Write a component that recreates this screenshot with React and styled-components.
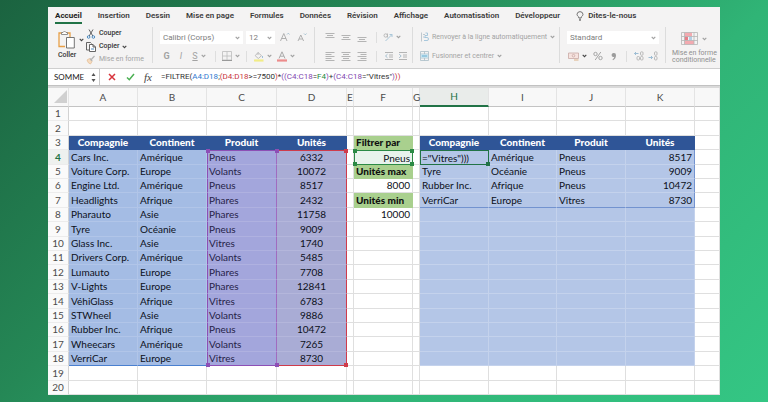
import React, { useState } from 'react'
import styled, { createGlobalStyle, css } from 'styled-components'

const GlobalStyle = createGlobalStyle`
    * {
        box-sizing: border-box;
    }
    body {
        margin: 0;
        font-family: Roboto, "Liberation Sans", sans-serif;
    }
    button, input, select {
        font: inherit;
        color: inherit;
        background: none;
        border: none;
        padding: 0;
        margin: 0;
    }
    svg {
        display: block;
        flex: none;
    }
`

const Page = styled.div`
    min-height: 100vh;
    padding: 7px 48px;
    background: linear-gradient(135deg, #1b6340 0%, #258856 34%, #30b476 66%, #34c684 100%);
`
const Window = styled.main`
    background-color: white;
    overflow: hidden;
`

/* tabs */
const Tabs = styled.nav`
    display: flex;
    gap: 16px;
    padding: 3px 7px 0;
    height: 20px;
    background-color: #f4f3f3;
`
const Tab = styled.a`
    display: flex;
    align-items: center;
    gap: 4px;
    height: 14px;
    font-size: 8px;
    line-height: 12px;
    font-weight: 600;
    white-space: nowrap;
    text-decoration: none;
    color: #3b3b3b;
    border-bottom: 2px solid ${props => props.$active ? '#217346' : 'transparent'};
    ${props => props.$active && 'font-weight: 700; color: #222;'}
`

/* ribbon */
const Ribbon = styled.div`
    display: flex;
    height: 42px;
    padding-bottom: 5px;
    background-color: #f4f3f3;
    border-bottom: 1px solid #cfcfcf;
`
const Group = styled.div`
    display: flex;
    flex: none;
    flex-direction: ${props => props.$row ? 'row' : 'column'};
    justify-content: ${props => props.$row ? 'flex-start' : 'space-between'};
    align-items: flex-start;
    width: ${props => props.$width}px;
    padding: ${props => props.$row ? '0 7px' : '3px 7px 0'};
    border-right: 1px solid #dcdcdc;
    &:last-child {
        border-right: none;
        flex: 1;
        padding: 0 4px 0 6px;
    }
`
const Line = styled.div`
    display: flex;
    align-items: center;
    gap: ${props => props.$gap || 0}px;
    height: 14px;
`
const Tool = styled.button`
    display: flex;
    flex: none;
    align-items: center;
    justify-content: ${props => props.$left ? 'flex-start' : 'center'};
    gap: 3px;
    min-width: ${props => props.$width || 16}px;
    height: 13px;
    font-size: ${props => props.$big ? 9 : 7}px;
    line-height: 9px;
    white-space: nowrap;
    color: ${props => props.$on ? '#333' : '#a3a3a3'};
    ${props => props.$on && 'font-weight: 500;'}
`
const Separator = styled.span`
    width: 1px;
    height: 11px;
    margin: 0 6px;
    background-color: #dedede;
`
const PasteButton = styled.button`
    display: flex;
    flex-direction: column;
    align-items: flex-start;
    gap: 2px;
    width: 31px;
    padding: 3px 0 0 3px;
    font-size: 7px;
    font-weight: 500;
    line-height: 9px;
    color: #333;
`
const PasteIcons = styled.span`
    display: flex;
    align-items: center;
    gap: 4px;
`
const ClipList = styled.div`
    display: flex;
    flex-direction: column;
`
const FormatButton = styled.button`
    display: flex;
    flex-direction: column;
    align-items: center;
    gap: 5px;
    padding-top: 5px;
    font-size: 7px;
    line-height: 7px;
    color: #8f8f8f;
    text-align: left;
    white-space: nowrap;
`
const SelectBox = styled.span`
    position: relative;
    display: flex;
    width: ${props => props.$width}px;
    height: 13px;
    background-color: white;
    select {
        width: 100%;
        padding-left: 3px;
        appearance: none;
        font-size: 8px;
        color: #7d7d7d;
    }
    svg {
        position: absolute;
        right: 3px;
        top: 5px;
        pointer-events: none;
    }
`

/* formula bar */
const FormulaBar = styled.div`
    display: flex;
    align-items: center;
    height: 17px;
    font-family: Lato, "Open Sans", sans-serif;
    border-bottom: 1px solid #c2c2c2;
`
const NameBox = styled.div`
    display: flex;
    align-items: center;
    justify-content: space-between;
    width: 52px;
    height: 16px;
    padding: 0 3px 0 6px;
    border-right: 1px solid #c8c8c8;
    input {
        width: 34px;
        font-size: 8px;
        color: #222;
    }
`
const BarButton = styled.button`
    display: flex;
    align-items: center;
    justify-content: center;
    width: 18px;
    height: 14px;
    font-family: "Liberation Serif", serif;
    font-style: italic;
    font-size: 11px;
    line-height: 12px;
    color: #444;
`
const BarButtons = styled.div`
    display: flex;
    padding: 0 4px 0 3px;
`
const Formula = styled.div`
    font-family: Roboto, "Liberation Sans", sans-serif;
    font-size: 8px;
    line-height: 14px;
    white-space: nowrap;
    color: #333;
`
const Ref = styled.span`
    color: ${props => props.$color};
`
const Strip = styled.div`
    height: 2px;
    background-color: #dadada;
`

/* sheet */
const Sheet = styled.table`
    width: 100%;
    table-layout: fixed;
    border-collapse: separate;
    border-spacing: 0;
    font-family: Lato, "Open Sans", sans-serif;
    font-size: 10px;
    line-height: 13px;
    color: #0c1020;
`
const ColHead = styled.th`
    height: 19px;
    padding: 0;
    font-weight: 400;
    background-color: ${props => props.$active ? '#e9ecea' : '#f8f8f8'};
    color: ${props => props.$active ? '#217346' : '#4c4c4c'};
    border-bottom: ${props => props.$active ? '2px solid #217346' : '1px solid #c4c4c4'};
    border-right: 1px solid #e4e4e4;
    svg {
        margin: 0 1px 1px auto;
    }
`
const RowHead = styled.th`
    padding: 0;
    font-weight: ${props => props.$active ? 700 : 400};
    color: ${props => props.$active ? '#217346' : '#4c4c4c'};
    background-color: ${props => props.$active ? '#eef1ef' : '#fafafa'};
    border-right: 1px solid #d2d2d2;
    border-bottom: 1px solid #ececec;
`
const Row = styled.tr`
    height: 14px;
    &:nth-child(5n + 2), &:nth-child(5n + 4) {
        height: 15px;
    }
`
const kinds = {
    empty: css`
        border-color: #dfdfdf;
    `,
    title: css`
        font-weight: 900;
        text-align: center;
        color: white;
        background-color: #2f5597;
        border-color: #2f5597;
    `,
    source: css`
        background-color: #a4bce4;
        border-color: #b1c5e8;
    `,
    product: css`
        padding-left: 1px;
        color: #262348;
        background-color: #a3a6dc;
        border-color: #afb1e0;
        border-left: 1px solid #8d4fb5;
        border-right-color: #a06cc0;
    `,
    units: css`
        text-align: center;
        background-color: #a9acd5;
        border-color: #b4b6db;
        border-right: 1px solid #cf3b4b;
    `,
    label: css`
        font-weight: 900;
        color: #111;
        background-color: #a9d08e;
        border-color: #a9d08e;
    `,
    value: css`
        text-align: right;
        border-color: #dfdfdf;
    `,
    criteria: css`
        text-align: right;
        background-color: #e8f3ec;
        border: 1px solid #2b8a45;
        line-height: 12px;
    `,
    result: css`
        background-color: #b4c6e7;
        border-color: #c4d2ec;
    `,
}
const Cell = styled.td`
    position: relative;
    padding: 0 2px;
    overflow: visible;
    white-space: nowrap;
    border: 0 solid;
    border-right-width: 1px;
    border-bottom-width: 1px;
    ${props => kinds[props.$kind]}
    ${props => props.$right && 'text-align: right;'}
    ${props => props.$top && `border-top: 1px solid ${props.$top};`}
    ${props => props.$bottom && `border-bottom: 1px solid ${props.$bottom};`}
    ${props => props.$edge && `border-right-color: ${props.$edge};`}
    ${props => props.$editing && `
        padding: 0 1px;
        border: 1px solid #217346;
        line-height: 12px;
    `}
`
const CellInput = styled.input`
    display: block;
    width: 100%;
    height: 12px;
`
const corners = {
    tl: 'left: -2px; top: -2px;',
    tr: 'right: -2px; top: -2px;',
    bl: 'left: -2px; bottom: -2px;',
    br: 'right: -2px; bottom: -2px;',
}
const Handle = styled.span`
    position: absolute;
    z-index: 1;
    width: 4px;
    height: 4px;
    background-color: ${props => props.$color};
    ${props => corners[props.$at]}
`

const PURPLE = '#8d4fb5'
const RED = '#cf3b4b'
const BLUE = '#4a80d0'
const GREEN = '#2b8a45'

const tabs = ['Accueil', 'Insertion', 'Dessin', 'Mise en page', 'Formules', 'Données', 'Révision', 'Affichage', 'Automatisation', 'Développeur']

const formula = [
    ['=FILTRE('],
    ['A4:D18', '#2f78cf'],
    [';'],
    ['(D4:D18', '#c8343c'],
    ['>=7500'],
    [')', '#c8343c'],
    ['*'],
    ['((C4:C18', '#7f48b0'],
    ['='],
    ['F4', '#258a3c'],
    [')', '#7f48b0'],
    ['+'],
    ['(C4:C18', '#7f48b0'],
    ['="Vitres"'],
    [')', '#7f48b0'],
    ['))', '#c8343c'],
]

const columns = [
    ['A', 69], ['B', 69], ['C', 70], ['D', 70], ['E', 7], ['F', 59], ['G', 7],
    ['H', 69], ['I', 68], ['J', 69], ['K', 69], ['', 25],
]

const source = [
    ['Cars Inc.', 'Amérique', 'Pneus', 6332],
    ['Voiture Corp.', 'Europe', 'Volants', 10072],
    ['Engine Ltd.', 'Amérique', 'Pneus', 8517],
    ['Headlights', 'Afrique', 'Phares', 2432],
    ['Pharauto', 'Asie', 'Phares', 11758],
    ['Tyre', 'Océanie', 'Pneus', 9009],
    ['Glass Inc.', 'Asie', 'Vitres', 1740],
    ['Drivers Corp.', 'Amérique', 'Volants', 5485],
    ['Lumauto', 'Europe', 'Phares', 7708],
    ['V-Lights', 'Europe', 'Phares', 12841],
    ['VéhiGlass', 'Afrique', 'Vitres', 6783],
    ['STWheel', 'Asie', 'Volants', 9886],
    ['Rubber Inc.', 'Afrique', 'Pneus', 10472],
    ['Wheecars', 'Amérique', 'Volants', 7265],
    ['VerriCar', 'Europe', 'Vitres', 8730],
]

const results = [
    ['="Vitres")))', 'Amérique', 'Pneus', 8517],
    ['Tyre', 'Océanie', 'Pneus', 9009],
    ['Rubber Inc.', 'Afrique', 'Pneus', 10472],
    ['VerriCar', 'Europe', 'Vitres', 8730],
]

const titles = ['Compagnie', 'Continent', 'Produit', 'Unités']

const filters = {
    3: ['label', 'Filtrer par'],
    4: ['criteria', 'Pneus'],
    5: ['label', 'Unités max'],
    6: ['value', '8000'],
    7: ['label', 'Unités min'],
    8: ['value', '10000'],
}

const Chevron = ({ dark }) => (
    <svg width="5" height="4" viewBox="0 0 5 4">
        <path d="M0.7 0.8L2.5 2.7L4.3 0.8" fill="none" stroke={dark ? '#444' : '#a0a0a0'} strokeWidth="1.1" />
    </svg>
)

const Lines = ({ y, align }) => {
    const shift = { left: 0, center: 1.5, right: 3 }[align]
    return (
        <svg width="10" height="11" viewBox="0 0 10 11" stroke="#b4b4b4" strokeWidth="1">
            {y.map((v, i) => {
                const x = i % 2 ? shift : 0
                return <path key={v} d={`M${x + 0.5} ${v}H${i % 2 ? x + 6.5 : 9.5}`} />
            })}
        </svg>
    )
}

const Indent = ({ back }) => (
    <svg width="10" height="10" viewBox="0 0 10 10" fill="none" stroke="#b4b4b4">
        <path d="M1 1.5H9M5 4H9M5 6H9M1 8.5H9" />
        <path d={back ? 'M3.5 3.2L1.5 5L3.5 6.8' : 'M1.2 3.2L3.2 5L1.2 6.8'} stroke="#a5bfd0" />
    </svg>
)

const PasteIcon = () => (
    <svg width="17" height="19" viewBox="0 0 17 19" fill="none">
        <path d="M7 16.5H1V3H12V7" stroke="#e8a048" strokeWidth="1.3" />
        <path d="M3.5 4.5V2.5H5Q6.5 -0.5 8 2.5H9.5V4.5Z" fill="#fff" stroke="#777" strokeWidth="0.8" />
        <path d="M8.5 7.5H16.3V18H8.5Z" fill="#fff" stroke="#666" strokeWidth="0.9" />
    </svg>
)

const CutIcon = () => (
    <svg width="10" height="10" viewBox="0 0 10 10" fill="none">
        <path d="M3 0.5L6.8 7M7 0.5L3.2 7" stroke="#555" strokeWidth="0.9" />
        <circle cx="2.6" cy="8" r="1.3" stroke="#3d82bd" strokeWidth="0.9" />
        <circle cx="7.4" cy="8" r="1.3" stroke="#3d82bd" strokeWidth="0.9" />
    </svg>
)

const CopyIcon = () => (
    <svg width="10" height="10" viewBox="0 0 10 10" fill="none" stroke="#555" strokeWidth="0.9">
        <path d="M3.5 8H0.5V0.5H4.5L5.5 1.5" />
        <path d="M3.5 2.5H7L9.5 5V9.5H3.5ZM7 2.5V5H9.5" fill="#fff" />
        <path d="M5 7H8" stroke="#3d82bd" />
    </svg>
)

const BrushIcon = () => (
    <svg width="10" height="10" viewBox="0 0 10 10" fill="none">
        <path d="M1 5L3.5 3.5L6 6.5L4.5 9Q2 8.5 1 5Z" fill="#f6dcc0" stroke="#e5bf98" strokeWidth="0.8" />
        <path d="M4 3.5L6.2 6M5.3 4.5L8.5 1" stroke="#b5b5b5" strokeWidth="1.2" />
    </svg>
)

const BorderIcon = () => (
    <svg width="10" height="10" viewBox="0 0 10 10" fill="none" stroke="#bdbdbd">
        <path d="M0.5 0.5H9.5V9H0.5ZM5 0.5V9M0.5 5H9.5" strokeWidth="0.8" />
        <path d="M0 9.5H10" stroke="#999" />
    </svg>
)

const BucketIcon = () => (
    <svg width="10" height="11" viewBox="0 0 10 11" fill="none">
        <path d="M4 1.5L7.5 4.7L4.3 7.5L1.2 4.7ZM4 1.5V4" stroke="#b5b5b5" strokeWidth="0.9" />
        <path d="M8.5 5V7" stroke="#9fc0d8" />
        <path d="M0 9.5H9.5" stroke="#f1ec86" strokeWidth="2.2" />
    </svg>
)

const FontColorIcon = () => (
    <svg width="10" height="11" viewBox="0 0 10 11" fill="none">
        <path d="M2 7.5L5 0.8L8 7.5M3.2 5.2H6.8" stroke="#a8a8a8" strokeWidth="1" />
        <path d="M0 9.5H10" stroke="#ec8b8b" strokeWidth="2.2" />
    </svg>
)

const SizeIcon = ({ down }) => (
    <svg width="10" height="10" viewBox="0 0 10 10" fill="none" stroke="#a8a8a8" strokeWidth="0.9">
        <path d={down ? 'M1 9L3.8 3L6.6 9M2 7H5.6' : 'M0.5 9L3.8 1.5L7 9M1.7 6.5H6'} />
        <path d={down ? 'M7 1.5L8.3 2.8L9.6 1.5' : 'M7 2.5L8.3 1.2L9.6 2.5'} stroke="#9fbccc" />
    </svg>
)

const OrientIcon = () => (
    <svg width="10" height="10" viewBox="0 0 10 10" fill="none">
        <path d="M2.5 9L9 2.5M9 5V2.5H6.5" stroke="#a9c6d8" />
        <circle cx="2.7" cy="3.5" r="1.7" stroke="#b4b4b4" strokeWidth="0.9" />
        <path d="M4.5 1.5V5.5" stroke="#b4b4b4" strokeWidth="0.9" />
    </svg>
)

const WrapIcon = () => (
    <svg width="9" height="10" viewBox="0 0 9 10" fill="none" stroke="#b9c3ca" strokeWidth="0.9">
        <path d="M1.5 0.5V9.5M3 2.5H5M3 5H4" />
        <path d="M5.5 1L7.5 1V3.5H5V6M4 8.5H7Q8.5 8.5 8.5 7T7 5.5H4.5" stroke="#9fc3da" />
    </svg>
)

const MergeIcon = () => (
    <svg width="9" height="10" viewBox="0 0 9 10" fill="none">
        <path d="M0.5 0.5H8.5V9.5H0.5ZM0.5 3H8.5M0.5 7H8.5M4.5 0.5V3M4.5 7V9.5" stroke="#a9bcc6" strokeWidth="0.8" />
        <path d="M1 3.4H8V6.6H1Z" fill="#bfe3f2" />
        <path d="M2 5H7" stroke="#68a9cb" strokeWidth="0.9" />
    </svg>
)

const CurrencyIcon = () => (
    <svg width="11" height="9" viewBox="0 0 11 9" fill="none">
        <path d="M0.5 1H10.5V6.5H0.5Z" fill="#f6e3df" stroke="#c9a9a4" strokeWidth="0.8" />
        <circle cx="5.5" cy="3.7" r="1.3" stroke="#c9a9a4" strokeWidth="0.8" />
        <path d="M6 8H10.5" stroke="#dcb185" />
    </svg>
)

const PercentIcon = () => (
    <svg width="10" height="10" viewBox="0 0 10 10" fill="none" stroke="#a5a5a5" strokeWidth="1">
        <circle cx="2.5" cy="3" r="1.7" />
        <circle cx="7.5" cy="7" r="1.7" />
        <path d="M7.8 1L2.2 9" />
    </svg>
)

const CommaIcon = () => (
    <svg width="6" height="9" viewBox="0 0 6 9">
        <path d="M3 1A2 2 0 1 0 3.4 4.8Q3 6.5 1.5 7.5L2 8.2Q5 6.5 5 3.2Q5 1 3 1Z" fill="#9c9c9c" />
    </svg>
)

const DecimalIcon = ({ less }) => (
    <svg width="10" height="10" viewBox="0 0 10 10" fill="none" stroke="#b2b2b2" strokeWidth="0.9">
        <rect x="6.5" y="0.8" width="2.5" height="3.5" rx="1" />
        <rect x="6.5" y="5.5" width="2.5" height="3.5" rx="1" />
        {!less && <rect x="3" y="5.5" width="2.5" height="3.5" rx="1" />}
        <path d={less ? 'M0.5 6.5H4.5M3 5L4.5 6.5L3 8' : 'M4.5 2.5H0.5M2 1L0.5 2.5L2 4'} stroke="#93b7d0" />
    </svg>
)

const ConditionalIcon = () => (
    <svg width="17" height="13" viewBox="0 0 17 13" fill="none">
        <path d="M3.5 0.5H11V4.5H3.5ZM3.5 8.5H13V12.5H3.5Z" fill="#f3aab0" />
        <path d="M3.5 4.5H7V8.5H3.5Z" fill="#e77c86" />
        <path d="M8 4.5H11V8.5H8Z" fill="#b3cfe5" />
        <path d="M0.5 0.5H16.5V12.5H0.5ZM0.5 4.5H16.5M0.5 8.5H16.5M3.5 0.5V12.5M13 0.5V12.5" stroke="#b5b5b5" strokeWidth="0.8" />
    </svg>
)

const BulbIcon = () => (
    <svg width="8" height="10" viewBox="0 0 8 10" fill="none" stroke="#555" strokeWidth="0.8">
        <path d="M2.8 7V6Q1 4.8 1 3.3Q1.2 0.8 4 0.6Q6.8 0.8 7 3.3Q7 4.8 5.2 6V7ZM3 8.3H5M3.3 9.5H4.7" />
    </svg>
)

const Dropdown = ({ label, value, width }) => (
    <SelectBox $width={width}>
        <select aria-label={label} defaultValue={value}>
            <option>{value}</option>
        </select>
        <Chevron />
    </SelectBox>
)

const RibbonBar = () => (
    <Ribbon>
        <Group $row $width={105}>
            <PasteButton>
                <PasteIcons><PasteIcon /><Chevron dark /></PasteIcons>
                Coller
            </PasteButton>
            <ClipList>
                <Tool $left $on><CutIcon />Couper</Tool>
                <Tool $left $on><CopyIcon />Copier<Chevron dark /></Tool>
                <Tool $left><BrushIcon />Mise en forme</Tool>
            </ClipList>
        </Group>
        <Group $width={162}>
            <Line $gap={3}>
                <Dropdown label="Police" value="Calibri (Corps)" width={83} />
                <Dropdown label="Taille" value="12" width={29} />
                <Tool $width={14} aria-label="Agrandir la police"><SizeIcon /></Tool>
                <Tool $width={14} aria-label="Réduire la police"><SizeIcon down /></Tool>
            </Line>
            <Line>
                <Tool $big $width={13}><b>G</b></Tool>
                <Tool $big><i>I</i></Tool>
                <Tool $big $width={20}><u>S</u><Chevron /></Tool>
                <Separator />
                <Tool $width={18} aria-label="Bordures"><BorderIcon /><Chevron /></Tool>
                <Separator />
                <Tool $width={20} aria-label="Remplissage"><BucketIcon /><Chevron /></Tool>
                <Tool $width={26} aria-label="Couleur de police"><FontColorIcon /><Chevron /></Tool>
            </Line>
        </Group>
        <Group $width={98}>
            <Line>
                <Tool aria-label="Aligner en haut"><Lines y={[1.5, 3.5, 5.5]} align="center" /></Tool>
                <Tool aria-label="Aligner au centre"><Lines y={[3.5, 5.5, 7.5]} align="center" /></Tool>
                <Tool aria-label="Aligner en bas"><Lines y={[5.5, 7.5, 9.5]} align="center" /></Tool>
                <Separator />
                <Tool $width={18} aria-label="Orientation"><OrientIcon /><Chevron /></Tool>
            </Line>
            <Line>
                <Tool aria-label="Aligner à gauche"><Lines y={[1.5, 3.5, 5.5, 7.5, 9.5]} align="left" /></Tool>
                <Tool aria-label="Centrer"><Lines y={[1.5, 3.5, 5.5, 7.5, 9.5]} align="center" /></Tool>
                <Tool aria-label="Aligner à droite"><Lines y={[1.5, 3.5, 5.5, 7.5, 9.5]} align="right" /></Tool>
                <Separator />
                <Tool $width={12} aria-label="Diminuer le retrait"><Indent back /></Tool>
                <Tool aria-label="Augmenter le retrait"><Indent /></Tool>
            </Line>
        </Group>
        <Group $width={147}>
            <Line><Tool $left><WrapIcon />Renvoyer à la ligne automatiquement<Chevron /></Tool></Line>
            <Line><Tool $left><MergeIcon />Fusionner et centrer<Chevron /></Tool></Line>
        </Group>
        <Group $width={106}>
            <Line><Dropdown label="Format de nombre" value="Standard" width={92} /></Line>
            <Line>
                <Tool $width={21} aria-label="Monétaire"><CurrencyIcon /><Chevron dark /></Tool>
                <Tool $width={20} aria-label="Pourcentage"><PercentIcon /></Tool>
                <Tool $width={12} aria-label="Séparateur"><CommaIcon /></Tool>
                <Separator />
                <Tool $width={12} aria-label="Ajouter une décimale"><DecimalIcon /></Tool>
                <Tool aria-label="Réduire les décimales"><DecimalIcon less /></Tool>
            </Line>
        </Group>
        <Group $row>
            <FormatButton>
                <PasteIcons><ConditionalIcon /><Chevron /></PasteIcons>
                <span>Mise en forme<br />conditionnelle</span>
            </FormatButton>
        </Group>
    </Ribbon>
)

const SheetRow = ({ n, edit, setEdit }) => {
    const data = source[n - 4]
    const found = results[n - 4]
    const first = n === 4
    const last = n === 18
    const inTable = n >= 4 && n <= 18
    const [filterKind, filterText] = filters[n] || ['empty', '']

    const left = titles.map((title, i) => {
        if (n === 3) return <Cell as="th" scope="col" key={i} $kind="title">{title}</Cell>
        if (!inTable) return <Cell key={i} $kind="empty" />
        if (i < 2) return (
            <Cell key={i} $kind="source" $bottom={last && BLUE}>{data[i]}</Cell>
        )
        const color = i === 2 ? PURPLE : RED
        return (
            <Cell key={i} $kind={i === 2 ? 'product' : 'units'} $top={first && color} $bottom={last && color}>
                {data[i]}
                {first && <Handle $at="tl" $color={PURPLE} />}
                {last && <Handle $at="bl" $color={PURPLE} />}
                {first && i === 3 && <Handle $at="tr" $color={RED} />}
                {last && i === 3 && <Handle $at="br" $color={RED} />}
            </Cell>
        )
    })

    const right = titles.map((title, i) => {
        if (n === 3) return <Cell as="th" scope="col" key={i} $kind="title">{title}</Cell>
        if (!inTable) return <Cell key={i} $kind="empty" />
        if (first && i === 0) return (
            <Cell key={i} $kind="result" $editing>
                <CellInput aria-label="H4" value={edit} onChange={e => setEdit(e.target.value)} />
                <Handle $at="br" $color="#217346" />
            </Cell>
        )
        return (
            <Cell key={i} $kind="result" $right={i === 3} $bottom={n === 7 && '#7393cf'} $edge={found && i === 3 && '#7393cf'}>
                {found && found[i]}
            </Cell>
        )
    })

    return (
        <Row>
            <RowHead scope="row" $active={first}>{n}</RowHead>
            {left}
            <Cell $kind="empty" />
            <Cell $kind={filterKind}>
                {filterText}
                {first && ['tl', 'tr', 'bl', 'br'].map(at => <Handle key={at} $at={at} $color={GREEN} />)}
            </Cell>
            <Cell $kind="empty" />
            {right}
            <Cell $kind="empty" />
        </Row>
    )
}

export default function App() {
    const [name, setName] = useState('SOMME')
    const [edit, setEdit] = useState('="Vitres")))')

    return (
        <Page>
            <GlobalStyle />
            <Window>
                <Tabs>
                    {tabs.map((tab, i) => <Tab href="#" key={tab} $active={i === 0}>{tab}</Tab>)}
                    <Tab href="#"><BulbIcon />Dites-le-nous</Tab>
                </Tabs>
                <RibbonBar />
                <FormulaBar>
                    <NameBox>
                        <input aria-label="Zone Nom" value={name} onChange={e => setName(e.target.value)} />
                        <svg width="5" height="11" viewBox="0 0 5 11" fill="#555">
                            <path d="M0.5 4L2.5 1L4.5 4ZM0.5 7L2.5 10L4.5 7Z" />
                        </svg>
                    </NameBox>
                    <BarButtons>
                        <BarButton aria-label="Annuler">
                            <svg width="8" height="8" viewBox="0 0 8 8"><path d="M1 1L7 7M7 1L1 7" stroke="#d8343c" strokeWidth="1.5" /></svg>
                        </BarButton>
                        <BarButton aria-label="Valider">
                            <svg width="9" height="8" viewBox="0 0 9 8"><path d="M1 4.5L3.3 6.7L8 1" fill="none" stroke="#4bb052" strokeWidth="1.5" /></svg>
                        </BarButton>
                        <BarButton aria-label="Insérer une fonction">fx</BarButton>
                    </BarButtons>
                    <Formula role="textbox" aria-label="Formule">
                        {formula.map(([text, color], i) => <Ref key={i} $color={color || 'inherit'}>{text}</Ref>)}
                    </Formula>
                </FormulaBar>
                <Strip />
                <Sheet>
                    <colgroup>
                        <col width="21" />
                        {columns.map(([letter, width]) => <col key={letter} width={width} />)}
                    </colgroup>
                    <thead>
                        <tr>
                            <ColHead>
                                <svg width="13" height="13" viewBox="0 0 13 13"><path d="M13 0V13H0Z" fill="#d0d0d0" /></svg>
                            </ColHead>
                            {columns.map(([letter]) => (
                                <ColHead key={letter} scope="col" $active={letter === 'H'}>{letter}</ColHead>
                            ))}
                        </tr>
                    </thead>
                    <tbody>
                        {Array.from({ length: 20 }, (_, i) => (
                            <SheetRow key={i} n={i + 1} edit={edit} setEdit={setEdit} />
                        ))}
                    </tbody>
                </Sheet>
            </Window>
        </Page>
    )
}
